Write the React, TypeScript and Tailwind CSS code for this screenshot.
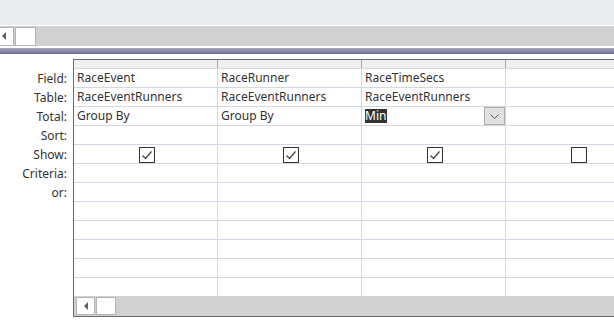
import React from 'react';

const FONT = { fontFamily: '"Segoe UI", "Noto Sans", "Open Sans", sans-serif' };

const LABELS = ['Field:', 'Table:', 'Total:', 'Sort:', 'Show:', 'Criteria:', 'or:'];

type Col = { field?: string; table?: string; total?: string; show?: boolean; active?: boolean };

const COLUMNS: Col[] = [
  { field: 'RaceEvent', table: 'RaceEventRunners', total: 'Group By', show: true },
  { field: 'RaceRunner', table: 'RaceEventRunners', total: 'Group By', show: true },
  { field: 'RaceTimeSecs', table: 'RaceEventRunners', total: 'Min', show: true, active: true },
  { show: false },
];

function LeftArrow() {
  return (
    <svg width="4" height="8" viewBox="0 0 4 8">
      <path d="M4 0 L0 4 L4 8 Z" fill="#606060" />
    </svg>
  );
}

function ScrollButtons({ offset = false }: { offset?: boolean }) {
  return (
    <div className={offset ? 'flex h-full items-center gap-[1px] pl-[2px]' : 'flex h-full items-center gap-[1px]'}>
      <div
        className={
          offset
            ? 'flex h-[18px] w-[19px] items-center justify-center border border-[#b4b4b4] bg-white'
            : 'flex h-[19px] w-[14px] items-center justify-start border border-l-0 border-[#b4b4b4] bg-white pl-[2px]'
        }
      >
        <LeftArrow />
      </div>
      <div
        className={
          offset
            ? 'h-[18px] w-[20px] border border-[#b4b4b4] bg-white'
            : 'h-[19px] w-[21px] border border-[#b4b4b4] bg-white'
        }
      />
    </div>
  );
}

function Check({ on }: { on: boolean }) {
  return (
    <div className="flex h-[16px] w-[16px] items-center justify-center border border-[#333] bg-white">
      {on && (
        <svg width="12" height="10" viewBox="0 0 12 10">
          <path d="M1.5 5.5 L4.5 8.5 L10.5 1.5" fill="none" stroke="#444" strokeWidth="1.3" />
        </svg>
      )}
    </div>
  );
}

function Cell({ children, last }: { children?: React.ReactNode; last?: boolean }) {
  return (
    <div
      className={
        last
          ? 'relative flex h-full w-[144px] shrink-0 items-center pl-[3px]'
          : 'relative flex h-full w-[144px] shrink-0 items-center border-r border-[#d0d7e5] pl-[3px]'
      }
    >
      {children}
    </div>
  );
}

function Row({ children, border = true }: { children: React.ReactNode; border?: boolean }) {
  return (
    <div
      className={
        border
          ? 'flex h-[19px] border-b border-[#d0d7e5]'
          : 'flex h-[18px]'
      }
    >
      {children}
    </div>
  );
}

export default function App() {
  const cellText = 'text-[12px] leading-none text-[#333]';
  return (
    <div className="h-[331px] w-[614px] overflow-hidden bg-white" style={FONT}>
      {/* upper pane stub */}
      <div className="h-[25px] bg-[#e9edf1]" />
      <div className="h-[1px] bg-white" />
      <div className="h-[20px] bg-[#d1d1d1]">
        <ScrollButtons />
      </div>
      <div className="h-[2px] bg-white" />
      <div className="h-[6px] bg-gradient-to-b from-[#a8a8c4] to-[#6c6c8e]" />
      <div className="h-[5px] bg-white" />

      {/* design grid */}
      <div className="flex">
        <div className="w-[73px] shrink-0 pt-[10px] pr-[6px] text-right">
          {LABELS.map((l) => (
            <div key={l} className="flex h-[19px] items-center justify-end text-[12px] text-[#333]">
              {l}
            </div>
          ))}
        </div>

        <div className="flex-1 overflow-hidden border-y border-l border-[#6a6a6a]">
          <div className="flex h-[9px] border-b border-[#d0d7e5] bg-[#f0f0f0]">
            {COLUMNS.map((_, i) => (
              <div
                key={i}
                className={
                  i === 3
                    ? 'h-full w-[144px] shrink-0'
                    : 'h-full w-[144px] shrink-0 border-r border-[#a8a8a8]'
                }
              />
            ))}
          </div>

          <Row>
            {COLUMNS.map((c, i) => (
              <Cell key={i} last={i === 3}>
                <span className={cellText}>{c.field}</span>
              </Cell>
            ))}
          </Row>
          <Row>
            {COLUMNS.map((c, i) => (
              <Cell key={i} last={i === 3}>
                <span className={cellText}>{c.table}</span>
              </Cell>
            ))}
          </Row>
          <Row>
            {COLUMNS.map((c, i) => (
              <Cell key={i} last={i === 3}>
                {c.active ? (
                  <>
                    <span className="flex h-[14px] items-center bg-[#333] pr-[1px] text-[12px] leading-none text-white">
                      {c.total}
                    </span>
                    <div className="absolute right-0 top-0 flex h-[18px] w-[21px] items-center justify-center border border-[#adadad] bg-[#e1e1e1]">
                      <svg width="9" height="5" viewBox="0 0 9 5">
                        <path d="M0.5 0.5 L4.5 4.5 L8.5 0.5" fill="none" stroke="#555" strokeWidth="1" />
                      </svg>
                    </div>
                  </>
                ) : (
                  <span className={cellText}>{c.total}</span>
                )}
              </Cell>
            ))}
          </Row>
          <Row>
            {COLUMNS.map((_, i) => (
              <Cell key={i} last={i === 3} />
            ))}
          </Row>
          <Row>
            {COLUMNS.map((c, i) => (
              <div
                key={i}
                className={
                  i === 3
                    ? 'flex h-full w-[144px] shrink-0 items-end justify-center pl-[2px]'
                    : 'flex h-full w-[144px] shrink-0 items-end justify-center border-r border-[#d0d7e5] pl-[2px]'
                }
              >
                <Check on={!!c.show} />
              </div>
            ))}
          </Row>
          {Array.from({ length: 6 }).map((_, r) => (
            <Row key={r}>
              {COLUMNS.map((_, i) => (
                <Cell key={i} last={i === 3} />
              ))}
            </Row>
          ))}
          <Row border={false}>
            {COLUMNS.map((_, i) => (
              <Cell key={i} last={i === 3} />
            ))}
          </Row>

          <div className="h-[20px] bg-[#d1d1d1]">
            <ScrollButtons offset />
          </div>
        </div>
      </div>
    </div>
  );
}
